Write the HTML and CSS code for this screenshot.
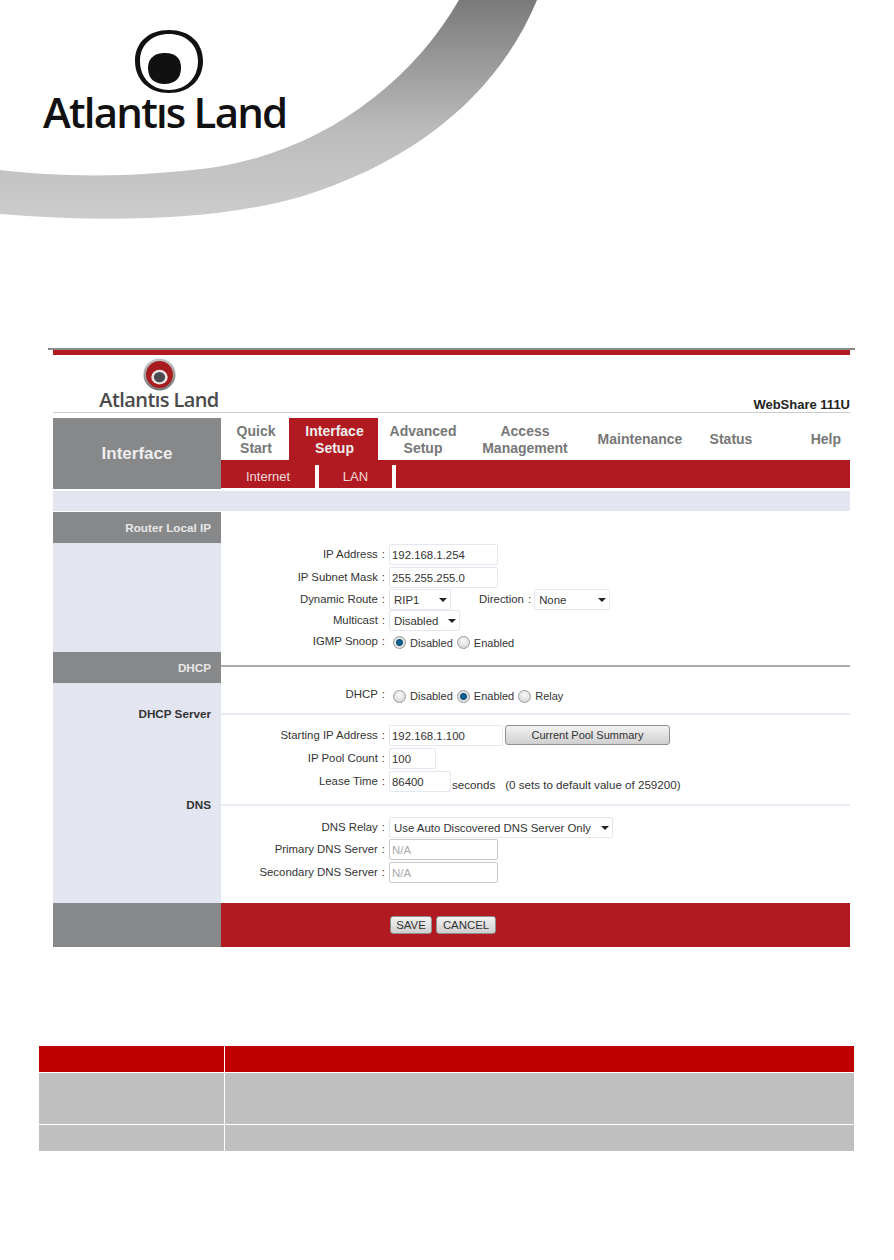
FILE: index.html
```html
<!DOCTYPE html>
<html lang="it">
<head>
    <meta charset="UTF-8">
    <title>Interface Setup - Atlantis Land</title>
    <link rel="stylesheet" href="styles.css">
</head>
<body>
    <!-- testata del manuale -->
    <div class="page-head">
        <svg class="swoosh" viewBox="0 0 894 230" width="894" height="230">
            <defs>
                <linearGradient id="swooshFill" x1="0" y1="0" x2="0" y2="1">
                    <stop offset="0" stop-color="#7a7a7a"/>
                    <stop offset="0.6" stop-color="#bcbcbc"/>
                    <stop offset="1" stop-color="#cccccc"/>
                </linearGradient>
            </defs>
            <path fill="url(#swooshFill)" d="M0 170C60 177 130 178 210 168C320 152 410 85 459 0L537 0C500 90 420 160 300 197C210 222 100 222 0 214Z"/>
        </svg>
        <div class="brand">
            <svg class="brand-mark" viewBox="0 0 68 63" width="68" height="63">
                <path fill="#111" fill-rule="evenodd" d="M34 0C54 0 68 12 68 31C68 50 54 63 34 63C14 63 0 50 0 31C0 12 14 0 34 0ZM34 4C18 4 5 14 5 31C5 49 18 60 34 60C50 60 63 49 63 31C63 14 50 4 34 4Z"/>
                <path fill="#111" d="M29.5 23C38 23 46 26 46 38C46 49 39 54 29.5 54C20 54 13 49 13 38C13 27 21 23 29.5 23Z"/>
            </svg>
            <div class="brand-name">Atlantıs Land</div>
        </div>
    </div>

    <!-- screenshot del router -->
    <div class="frame">
        <div class="redbar"></div>
        <div class="logo-row">
            <div class="small-logo">
                <svg viewBox="0 0 38 38" width="33" height="33">
                    <defs>
                        <linearGradient id="rim" x1="0" y1="0" x2="0" y2="1">
                            <stop offset="0" stop-color="#c9c9c9"/>
                            <stop offset="1" stop-color="#777"/>
                        </linearGradient>
                    </defs>
                    <circle cx="19" cy="19" r="18.5" fill="url(#rim)"/>
                    <circle cx="19" cy="19" r="15.5" fill="#a81c1f"/>
                    <ellipse cx="19" cy="22" rx="9.5" ry="8.5" fill="#e9e3e3"/>
                    <ellipse cx="19" cy="22" rx="6.5" ry="6" fill="#4a4c50"/>
                </svg>
                <div class="small-name">Atlantıs Land</div>
            </div>
            <div class="model">WebShare 111U</div>
        </div>

        <div class="nav">
            <div class="nav-title">Interface</div>
            <div>
                <div class="tabs">
                    <div class="tab shift">Quick<br>Start</div>
                    <div class="tab shift active">Interface<br>Setup</div>
                    <div class="tab">Advanced<br>Setup</div>
                    <div class="tab">Access<br>Management</div>
                    <div class="tab">Maintenance</div>
                    <div class="tab shift">Status</div>
                    <div class="tab help">Help</div>
                </div>
                <div class="subtabs">
                    <div class="subtab sub-internet">Internet</div>
                    <div class="subtab sub-lan">LAN</div>
                </div>
            </div>
        </div>

        <div class="band"></div>

        <div class="grid">
            <div class="side head">Router Local IP</div>
            <div class="main"></div>

            <div class="side"></div>
            <div class="main">
                <div class="field">
                    <span class="lbl">IP Address<span class="colon">:</span></span>
                    <input class="txt w109" type="text" value="192.168.1.254">
                </div>
                <div class="field">
                    <span class="lbl">IP Subnet Mask<span class="colon">:</span></span>
                    <input class="txt w109" type="text" value="255.255.255.0">
                </div>
                <div class="field">
                    <span class="lbl">Dynamic Route<span class="colon">:</span></span>
                    <span class="sel w62"><select><option>RIP1</option></select></span>
                    <span class="lbl-inline">Direction<span class="colon">:</span></span>
                    <span class="sel w76"><select><option>None</option></select></span>
                </div>
                <div class="field">
                    <span class="lbl">Multicast<span class="colon">:</span></span>
                    <span class="sel w71"><select><option>Disabled</option></select></span>
                </div>
                <div class="field radios">
                    <span class="lbl">IGMP Snoop<span class="colon">:</span></span>
                    <label class="opt"><input type="radio" name="igmp" checked>Disabled</label>
                    <label class="opt"><input type="radio" name="igmp">Enabled</label>
                </div>
            </div>

            <div class="side head">DHCP</div>
            <div class="main head-line"><hr class="rule-grey"></div>

            <div class="side"></div>
            <div class="main">
                <div class="field dhcp-row">
                    <span class="lbl">DHCP<span class="colon">:</span></span>
                    <label class="opt"><input type="radio" name="dhcp">Disabled</label>
                    <label class="opt"><input type="radio" name="dhcp" checked>Enabled</label>
                    <label class="opt"><input type="radio" name="dhcp">Relay</label>
                </div>
            </div>

            <div class="side sub-title">DHCP Server</div>
            <div class="main sub-line"><hr class="rule-soft"></div>

            <div class="side"></div>
            <div class="main pool">
                <div class="field">
                    <span class="lbl">Starting IP Address<span class="colon">:</span></span>
                    <input class="txt w114" type="text" value="192.168.1.100">
                    <button class="btn pool-btn" type="button">Current Pool Summary</button>
                </div>
                <div class="field">
                    <span class="lbl">IP Pool Count<span class="colon">:</span></span>
                    <input class="txt w47" type="text" value="100">
                </div>
                <div class="field">
                    <span class="lbl">Lease Time<span class="colon">:</span></span>
                    <input class="txt w62" type="text" value="86400">
                    <span class="hint">seconds</span>
                    <span class="hint hint-gap">(0 sets to default value of 259200)</span>
                </div>
            </div>

            <div class="side sub-title">DNS</div>
            <div class="main sub-line"><hr class="rule-soft"></div>

            <div class="side"></div>
            <div class="main dns">
                <div class="field">
                    <span class="lbl">DNS Relay<span class="colon">:</span></span>
                    <span class="sel w224"><select><option>Use Auto Discovered DNS Server Only</option></select></span>
                </div>
                <div class="field">
                    <span class="lbl">Primary DNS Server<span class="colon">:</span></span>
                    <input class="txt w109 off" type="text" value="N/A" disabled>
                </div>
                <div class="field">
                    <span class="lbl">Secondary DNS Server<span class="colon">:</span></span>
                    <input class="txt w109 off" type="text" value="N/A" disabled>
                </div>
            </div>

            <div class="foot-side"></div>
            <div class="foot">
                <button class="btn save" type="button">SAVE</button>
                <button class="btn cancel" type="button">CANCEL</button>
            </div>
        </div>
    </div>

    <!-- tabella vuota sotto la figura -->
    <div class="doc-table">
        <div class="th"></div><div class="th"></div>
        <div class="td row-tall"></div><div class="td row-tall"></div>
        <div class="td"></div><div class="td"></div>
    </div>
</body>
</html>
```

FILE: styles.css
```css
/* base */
body {
    margin: 0;
    background: #fff;
    color: #333;
    font-family: "Liberation Sans", Arial, sans-serif;
    font-size: 11.4px;
}

/* testata */
.page-head {
    position: relative;
    height: 348px;
}

.swoosh {
    position: absolute;
    left: 0;
    top: 0;
}

.brand {
    position: relative;
    width: 250px;
    padding: 30px 0 0 43px;
}

.brand-mark {
    display: block;
    margin-left: 92px;
}

.brand-name {
    font-family: "Open Sans", sans-serif;
    font-weight: 600;
    font-size: 42px;
    line-height: 38px;
    color: #111;
    white-space: nowrap;
    letter-spacing: -1.8px;
}

/* cornice */
.frame {
    width: 797px;
    margin-left: 48px;
    padding: 0 5px;
    border-top: 2px solid #8a8a8a;
}

.redbar {
    height: 5px;
    background: #b11a20;
}

.logo-row {
    display: flex;
    justify-content: space-between;
    align-items: flex-end;
    height: 57px;
    border-bottom: 1px solid #ccc;
    margin-bottom: 5px;
}

.small-logo {
    align-self: stretch;
    width: 120px;
    margin-left: 46px;
    text-align: center;
}

.small-logo svg {
    display: block;
    margin: 3px auto 0;
}

.small-name {
    font-family: "Open Sans", sans-serif;
    font-weight: 600;
    font-size: 20px;
    line-height: 18px;
    color: #4a4a4a;
    white-space: nowrap;
    letter-spacing: -0.6px;
}

.model {
    font-size: 13px;
    font-weight: bold;
    color: #222;
    line-height: 15px;
}

/* menu */
.nav {
    display: grid;
    grid-template-columns: 168px 1fr;
    height: 70px;
}

.nav-title {
    background: #87888a;
    color: #eee;
    font-size: 17px;
    font-weight: bold;
    text-align: center;
    line-height: 71px;
}

.tabs {
    display: grid;
    grid-template-columns: 68px 89px 90px 114px 116px 64px 1fr;
    height: 42px;
}

.tab {
    display: flex;
    align-items: center;
    justify-content: center;
    padding-top: 1px;
    text-align: center;
    font-size: 14px;
    font-weight: bold;
    line-height: 17px;
    color: #777;
}

.tab.shift {
    padding-left: 2px;
}

.tab.active {
    background: #b11a20;
    color: #eee;
}

.tab.help {
    justify-content: flex-end;
    padding-right: 9px;
}

.subtabs {
    display: flex;
    height: 28px;
    background: #b11a20;
}

.subtab {
    color: #f0dcdc;
    font-size: 13px;
    height: 23px;
    margin-top: 5px;
    line-height: 23px;
    text-align: center;
    border-right: 4px solid #fff;
}

.sub-internet {
    width: 94px;
}

.sub-lan {
    width: 73px;
}

.band {
    height: 20px;
    margin-top: 3px;
    margin-bottom: 1px;
    background: #e3e5f1;
}

/* tabella centrale */
.grid {
    display: grid;
    grid-template-columns: 168px 1fr;
}

.side {
    background: #e3e5f1;
    text-align: right;
    padding-right: 10px;
    font-size: 11.7px;
    font-weight: bold;
}

.head {
    height: 31px;
    line-height: 31px;
    background: #87888a;
    color: #e8e8e8;
}

.head-line {
    padding-top: 13px;
}

.rule-grey,
.rule-soft {
    margin: 0;
    border: 0;
}

.rule-grey {
    height: 2px;
    background: #aaa;
}

.rule-soft {
    height: 2px;
    background: #e8e9f3;
}

.sub-title {
    height: 14px;
    line-height: 13px;
}

.sub-line {
    padding-top: 6px;
}

.field {
    display: flex;
    align-items: center;
}

.radios {
    height: 21px;
}

.dhcp-row {
    height: 24px;
}

.pool {
    padding-top: 3px;
    padding-bottom: 5px;
}

.dns {
    padding-top: 5px;
    padding-bottom: 19px;
}

.lbl {
    width: 164px;
    margin-right: 4px;
    padding-bottom: 2px;
    text-align: right;
    white-space: nowrap;
}

.lbl-inline {
    margin: 0 3px 0 28px;
    padding-bottom: 2px;
}

.colon {
    margin-left: 4px;
}

/* campi */
.txt {
    height: 21px;
    margin: 1px 0;
    padding: 0 2px;
    box-sizing: border-box;
    border: 1px solid #e4e6f0;
    border-radius: 2px;
    font: 11.4px "Liberation Sans", Arial, sans-serif;
    color: #333;
    background: #fff;
}

.txt.off {
    border-color: #c9c9c9;
    color: #aaa;
}

.w47 { width: 47px; }
.w62 { width: 62px; }
.w71 { width: 71px; }
.w76 { width: 76px; }
.w109 { width: 109px; }
.w114 { width: 114px; }
.w224 { width: 224px; }

.sel {
    position: relative;
    display: block;
    height: 21px;
}

.sel select {
    appearance: none;
    display: block;
    width: 100%;
    height: 21px;
    padding: 0 0 0 4px;
    border: 1px solid #e4e6f0;
    border-radius: 2px;
    background: #fff;
    font: 11.4px "Liberation Sans", Arial, sans-serif;
    color: #333;
}

.sel::after {
    content: "";
    position: absolute;
    right: 4px;
    top: 9px;
    border-left: 4px solid transparent;
    border-right: 4px solid transparent;
    border-top: 4px solid #222;
}

.opt {
    display: flex;
    align-items: center;
    margin-right: 4px;
    padding-top: 2px;
    font-size: 11px;
}

.lbl + .opt {
    margin-left: 4px;
}

.opt input {
    appearance: none;
    width: 13px;
    height: 13px;
    margin: 0 4px 0 0;
    border: 1px solid #9a9a9a;
    border-radius: 50%;
    background: radial-gradient(circle at 50% 35%, #fafafa, #cfcfcf);
}

.opt input:checked {
    background: radial-gradient(circle, #0d6fa8 0, #0a4f7c 3px, #e6e6e6 4px, #cfcfcf 100%);
}

.hint {
    padding-top: 6px;
    margin-left: 1px;
    font-size: 11.6px;
}

.hint-gap {
    margin-left: 10px;
}

/* bottoni */
.btn {
    padding: 0;
    border: 1px solid #8f8f8f;
    border-radius: 3px;
    background: linear-gradient(#f2f2f2, #cfcfcf);
    font: 11.4px "Liberation Sans", Arial, sans-serif;
    color: #333;
}

.pool-btn {
    width: 165px;
    height: 20px;
    margin: 0 0 2px 2px;
    font-size: 11px;
}

.foot-side {
    background: #87888a;
    height: 44px;
}

.foot {
    display: flex;
    gap: 4px;
    padding: 13px 0 0 169px;
    background: #b11a20;
}

.save {
    width: 42px;
    height: 18px;
}

.cancel {
    width: 60px;
    height: 18px;
}

/* tabella sotto */
.doc-table {
    display: grid;
    grid-template-columns: 185px 1fr;
    gap: 1px;
    width: 815px;
    margin: 99px 0 0 39px;
}

.th {
    height: 26px;
    background: #c00000;
}

.td {
    height: 26px;
    background: #bfbfbf;
}

.row-tall {
    height: 51px;
}
```
